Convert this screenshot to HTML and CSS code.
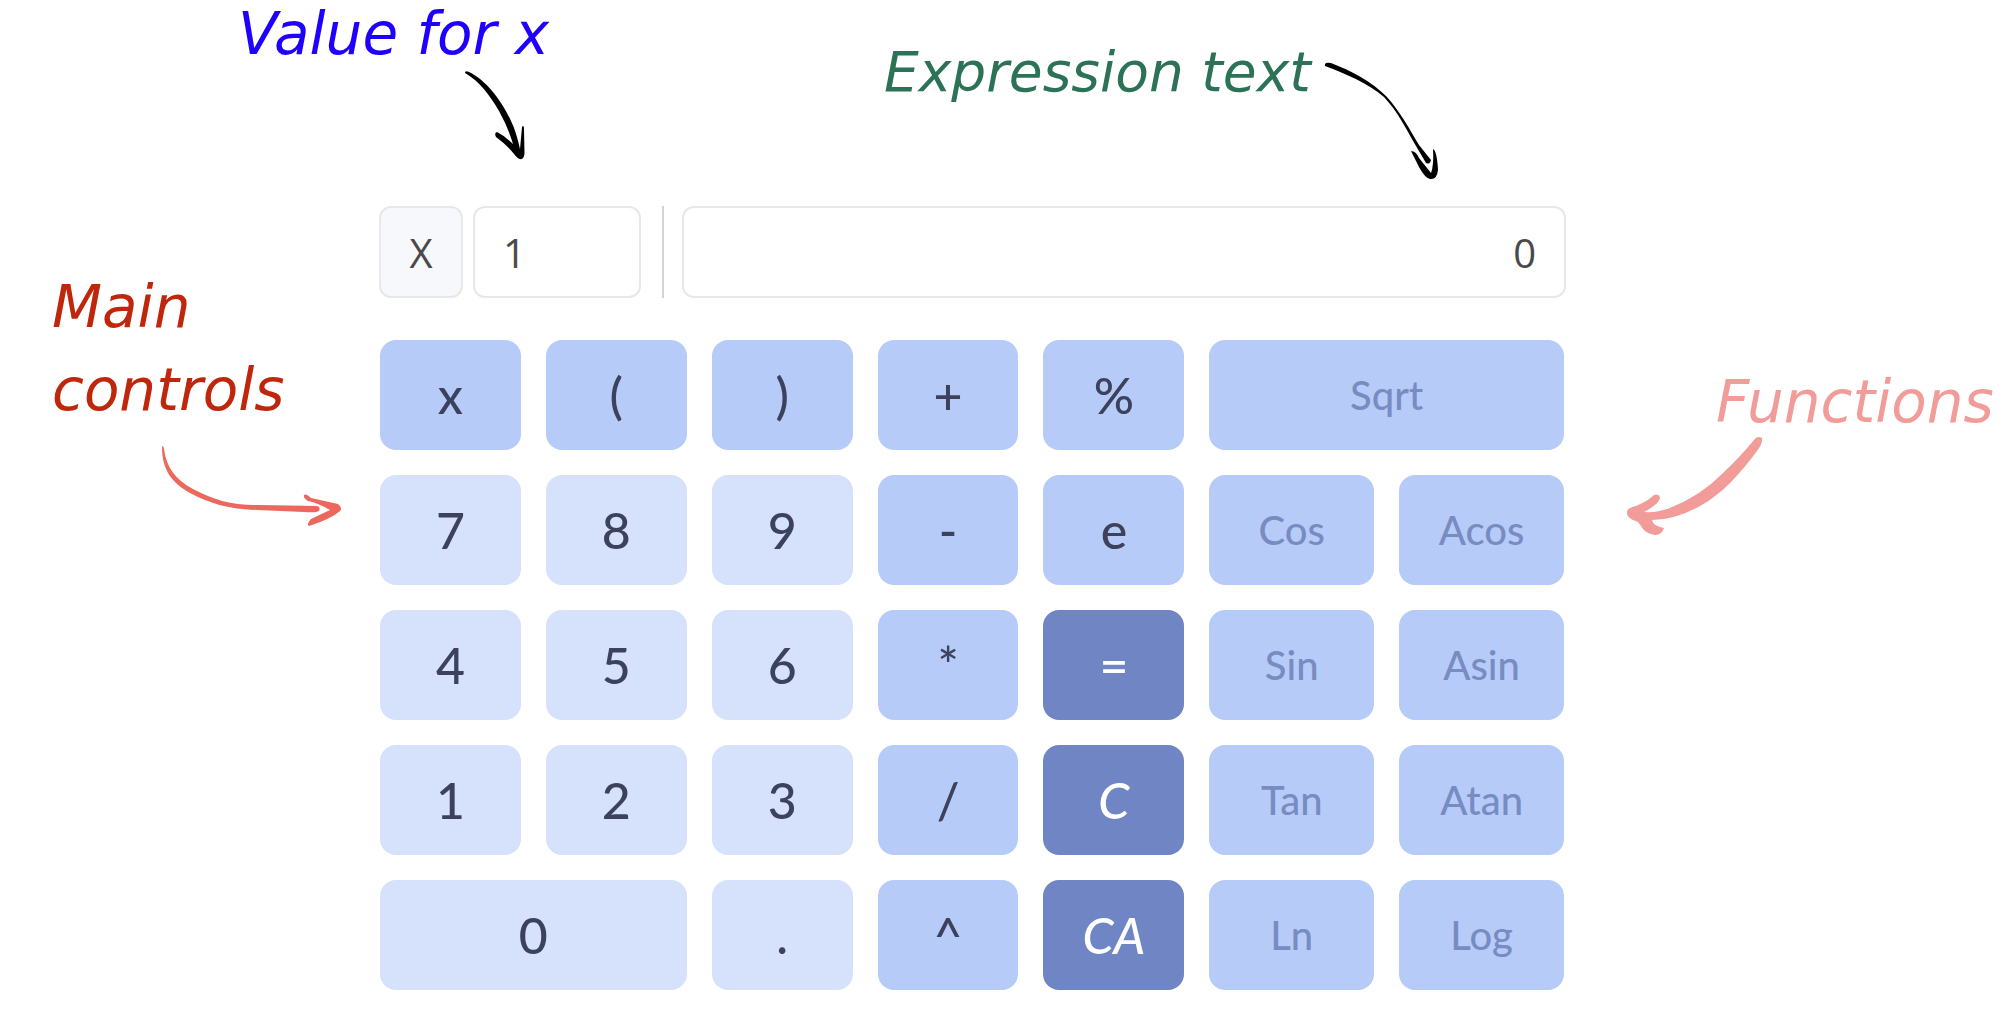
FILE: index.html
```html
<!DOCTYPE html>
<html lang="en">
<head>
<meta charset="utf-8">
<title>Calculator guide</title>
<link rel="stylesheet" href="styles.css">
</head>
<body>
<header class="callouts">
  <div class="note note-value">
    <p class="note-text">Value for x</p>
    <svg class="arrow-value" width="64" height="96" viewBox="462 68 64 96" aria-hidden="true">
      <path d="M465 73Q465 70 469 72C486 80 502 101 511 121Q516 131 520 149L522 127Q524 124 524 130L524.500 153Q524 160 520 159Q518 159 514 154Q507 145 496 137Q494 133 497 132Q505 136 513 144Q508 127 499 111C489 94 480 82 465 73Z"/>
    </svg>
  </div>
  <div class="note note-expression">
    <p class="note-text">Expression text</p>
    <svg class="arrow-expression" width="120" height="124" viewBox="1322 60 120 124" aria-hidden="true">
      <path d="M1325 64Q1326 62 1331 63C1352 71 1372 82 1386 96C1400 111 1410 130 1419 145L1431 160Q1430 165 1426 163L1416 146C1406 129 1398 112 1384 97C1368 83 1346 74 1325 66Z"/>
      <path d="M1411 151Q1416 151 1419 158L1431 173Q1434 165 1433 149Q1437 151 1438 170Q1437 180 1430 179Q1425 178 1419 167Z"/>
    </svg>
  </div>
</header>

<div class="board">
  <aside class="note note-main">
    <p class="note-text">Main<br>controls</p>
    <svg class="arrow-main" width="190" height="90" viewBox="156 440 190 90" aria-hidden="true">
      <path d="M162 447Q163 444 164 449C166 467 176 480 193 489C213 500 235 506 260 505L317 506Q321 507 319 511Q316 513 304 512L257 510C230 509 210 504 190 493C172 483 162 470 162 447Z"/>
      <path d="M304 495Q306 493 311 498L338 504Q343 508 340 511Q331 519 309 526Q306 525 311 519L330 510Q318 503 308 501Q303 498 304 495Z"/>
    </svg>
  </aside>

  <main class="calculator">
    <form class="display">
      <label class="variable" for="x-value">X</label>
      <input class="field x-value" id="x-value" type="text" value="1">
      <span class="divider"></span>
      <input class="field expression" type="text" value="0" aria-label="Expression">
    </form>
    <div class="keys">
      <button class="key" type="button">x</button>
      <button class="key" type="button">(</button>
      <button class="key" type="button">)</button>
      <button class="key" type="button">+</button>
      <button class="key" type="button">%</button>
      <button class="key function wide" type="button">Sqrt</button>

      <button class="key digit" type="button">7</button>
      <button class="key digit" type="button">8</button>
      <button class="key digit" type="button">9</button>
      <button class="key" type="button">-</button>
      <button class="key" type="button">e</button>
      <button class="key function" type="button">Cos</button>
      <button class="key function" type="button">Acos</button>

      <button class="key digit" type="button">4</button>
      <button class="key digit" type="button">5</button>
      <button class="key digit" type="button">6</button>
      <button class="key" type="button">*</button>
      <button class="key action" type="button">=</button>
      <button class="key function" type="button">Sin</button>
      <button class="key function" type="button">Asin</button>

      <button class="key digit" type="button">1</button>
      <button class="key digit" type="button">2</button>
      <button class="key digit" type="button">3</button>
      <button class="key" type="button">/</button>
      <button class="key action clear" type="button">C</button>
      <button class="key function" type="button">Tan</button>
      <button class="key function" type="button">Atan</button>

      <button class="key digit wide" type="button">0</button>
      <button class="key digit" type="button">.</button>
      <button class="key" type="button">^</button>
      <button class="key action clear" type="button">CA</button>
      <button class="key function" type="button">Ln</button>
      <button class="key function" type="button">Log</button>
    </div>
  </main>

  <aside class="note note-functions">
    <p class="note-text">Functions</p>
    <svg class="arrow-functions" width="144" height="104" viewBox="1624 432 144 104" aria-hidden="true">
      <path d="M1754 438Q1757 433 1762 436Q1763 441 1757 449C1740 472 1722 492 1700 504Q1675 518 1652 518Q1653 524 1664 526Q1662 533 1655 533Q1644 531 1641 524L1638 520Q1626 516 1627 510Q1627 506 1636 504Q1648 499 1654 493Q1659 491 1660 496Q1659 502 1644 510Q1659 511 1672 505Q1700 494 1722 472Q1741 454 1754 438Z"/>
    </svg>
  </aside>
</div>
</body>
</html>
```
FILE: styles.css
```css
* {
  box-sizing: border-box;
}

body {
  margin: 0;
  background: #fff;
  font-family: Lato, "Open Sans", sans-serif;
}

.callouts {
  display: grid;
  grid-template-columns: 646fr 1129fr;
  padding-left: 238px;
  min-height: 206px;
}

.note {
  font-family: "DejaVu Sans", sans-serif;
  font-style: italic;
  font-size: 58px;
  line-height: 72px;
}

.note-text {
  margin: 0;
  white-space: nowrap;
}

.note svg {
  display: block;
  flex: none;
  fill: currentColor;
}

.note-value {
  color: #1f00ff;
  line-height: 68px;
}

.note-value .arrow-value {
  margin-left: 224px;
  color: #000;
}

.note-expression {
  display: flex;
  gap: 11px;
  padding-top: 36px;
  color: #2b7257;
  font-size: 55px;
}

.note-expression .arrow-expression {
  margin-top: 24px;
  color: #000;
}

.board {
  display: grid;
  grid-template-columns: minmax(0, 379fr) minmax(0, 1187fr) minmax(0, 447fr);
}

.note-main {
  padding: 60px 0 0 52px;
  color: #c0260b;
  line-height: 83px;
}

.note-main .arrow-main {
  margin: 8px 0 0 104px;
  color: #ec675c;
}

.note-functions {
  padding: 160px 0 0 58px;
  color: #f19c98;
}

.note-functions .note-text {
  height: 68px;
  padding-left: 92px;
}

.display {
  display: flex;
  align-items: stretch;
  height: 92px;
}

.variable,
.field {
  border: 2px solid #e8e8ea;
  border-radius: 12px;
  color: #4a4a4a;
  font: 500 40px "Open Sans", sans-serif;
}

.variable {
  display: flex;
  align-items: center;
  justify-content: center;
  width: 84px;
  margin-right: 10px;
  background: #f7f8fb;
}

.field {
  min-width: 0;
  padding: 0 28px;
  background: #fff;
}

.x-value {
  width: 168px;
}

.divider {
  width: 2px;
  margin: 0 18px 0 21px;
  background: #d4d4d8;
}

.expression {
  flex: 1;
  text-align: right;
}

.keys {
  display: grid;
  grid-template-columns: repeat(5, 141fr) repeat(2, 165fr);
  grid-auto-rows: 110px;
  gap: 25px;
  padding: 42px 2px 28px 1px;
}

.key {
  min-width: 0;
  padding: 0;
  border: 0;
  border-radius: 16px;
  background: #b7cbf9;
  color: #3c425c;
  font: 500 50px Lato, sans-serif;
}

.digit {
  background: #d6e1fc;
}

.function {
  color: #788cc2;
  font-size: 40px;
}

.action {
  background: #6f85c4;
  color: #fff;
}

.clear {
  font-style: italic;
}

.wide {
  grid-column: span 2;
}
```
